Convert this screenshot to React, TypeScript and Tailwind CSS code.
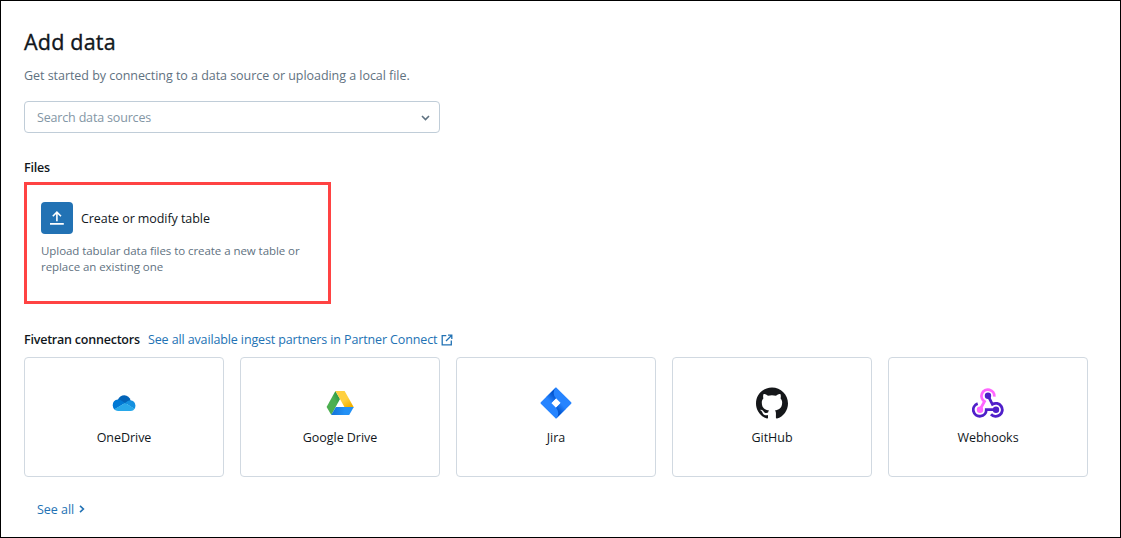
import type { ReactNode } from "react";
import { SiGithub } from "react-icons/si";

function OneDriveIcon() {
  return (
    <svg width="32" height="32" viewBox="0 0 32 32">
      <path d="M9.6 13.2 Q11.8 8.2 16.4 8.2 Q21 8.4 22.7 13.6 L18.5 17.5Z" fill="#0364b8" />
      <path d="M10 12.6 Q4.7 13 4.7 18.6 Q4.9 21.1 6.4 22.5 L17.2 16.1 L12.3 13 Q11.2 12.5 10 12.6Z" fill="#0078d4" />
      <path d="M22.4 13.3 Q19.7 13.3 17 16.1 L26.5 22.1 Q27.5 20.4 27.4 18.5 Q26.9 13.8 22.4 13.3Z" fill="#1490df" />
      <path d="M6.2 22.2 L17.1 16 L26.7 21.8 Q25.2 24 22.9 24 L10 24 Q7.7 23.9 6.2 22.2Z" fill="#28a8ea" />
    </svg>
  );
}

function GoogleDriveIcon() {
  return (
    <svg width="32" height="32" viewBox="0 0 32 32">
      <defs>
        <linearGradient id="gd-green" x1="0" y1="1" x2="1" y2="0">
          <stop offset="0.6" stopColor="#4caf50" />
          <stop offset="1" stopColor="#178b3f" />
        </linearGradient>
        <linearGradient id="gd-yellow" x1="0" y1="0" x2="0.7" y2="1">
          <stop offset="0.6" stopColor="#ffd040" />
          <stop offset="1" stopColor="#f2b100" />
        </linearGradient>
        <linearGradient id="gd-blue" x1="0" y1="0" x2="1" y2="0">
          <stop offset="0" stopColor="#1272d8" />
          <stop offset="0.6" stopColor="#2391f5" />
        </linearGradient>
      </defs>
      <path d="M11.4 4 L16 12 L7.3 28 L2.6 20Z" fill="url(#gd-green)" />
      <path d="M11.4 4 H20.6 L29.8 20.2 H20.6Z" fill="url(#gd-yellow)" />
      <path d="M11.8 20 H29.8 L25.2 28 H7.2Z" fill="url(#gd-blue)" />
    </svg>
  );
}

function JiraIcon() {
  return (
    <svg width="32" height="32" viewBox="0 0 32 32">
      <defs>
        <linearGradient id="jira-top" x1="15.5" y1="6" x2="8.5" y2="13" gradientUnits="userSpaceOnUse">
          <stop offset="0.18" stopColor="#0052cc" />
          <stop offset="1" stopColor="#2684ff" />
        </linearGradient>
        <linearGradient id="jira-bottom" x1="16.5" y1="26" x2="23.5" y2="19" gradientUnits="userSpaceOnUse">
          <stop offset="0.18" stopColor="#0052cc" />
          <stop offset="1" stopColor="#2684ff" />
        </linearGradient>
      </defs>
      <path d="M31.2 15.2 L16 0.2 L0.8 15.2 Q0.2 16 0.8 16.8 L16 31.8 L31.2 16.8 Q31.8 16 31.2 15.2Z M16 20.7 L11.3 16 L16 11.3 L20.7 16Z" fill="#2684ff" fillRule="evenodd" />
      <path d="M16 11.3 Q11.2 6 16 0.2 L5.8 10.4 L11.3 16Z" fill="url(#jira-top)" />
      <path d="M20.7 16 L16 20.7 Q20.8 26 16 31.8 L26.2 21.6Z" fill="url(#jira-bottom)" />
    </svg>
  );
}

function WebhooksIcon() {
  return (
    <svg width="32" height="32" viewBox="0 0 32 32" fill="none" strokeWidth="2.8">
      <path d="M8 22.7 L12.5 14.4 A6.4 6.4 0 1 1 22.3 9.6" stroke="#ff66ff" />
      <path d="M16 8.7 L20.4 17.3 A6.5 6.5 0 1 1 19 27.2" stroke="#4f1fc9" />
      <path d="M5.7 16.6 A6.5 6.5 0 1 0 14.3 22.7 H24" stroke="#4f1fc9" />
      <circle cx="16" cy="8.7" r="3.2" fill="#4f1fc9" />
      <circle cx="8" cy="22.7" r="3.2" fill="#ff66ff" />
      <circle cx="24" cy="22.7" r="3.2" fill="#4f1fc9" />
    </svg>
  );
}

function ConnectorCard({ name, icon }: { name: string; icon: ReactNode }) {
  return (
    <div className="flex h-[120px] w-[200px] flex-col items-center rounded-[4px] border border-[#d1d9e1] pt-[29px]">
      {icon}
      <span className="mt-[9px] leading-5">{name}</span>
    </div>
  );
}

export default function App() {
  return (
    <main className="h-[538px] w-[1121px] overflow-hidden border border-black bg-white pt-[27px] pl-[23px] font-['Open_Sans','Noto_Sans',sans-serif] text-[12.5px] tracking-[-0.04px] text-[#11171c]">
      <h1 className="text-[21.5px] leading-7 font-medium tracking-[0.2px] [-webkit-text-stroke:0.35px_#11171c]">Add data</h1>
      <p className="mt-[10px] leading-5 text-[#5f7281]">
        <span>Get started by connecting to a data source or uploading a local file.</span>
      </p>
      <div className="mt-[15px] flex h-8 w-[416px] items-center justify-between rounded-[4px] border border-[#c0cdd8] pr-[9px] pl-3 text-[#8396a5]">
        <span className="pt-[2px] tracking-[-0.17px]">Search data sources</span>
        <svg className="mt-px" width="9" height="6" viewBox="0 0 9 6" fill="none" stroke="#5f7281" strokeWidth="1.6">
          <path d="M1 1 L4.5 4.5 L8 1" />
        </svg>
      </div>
      <h2 className="mt-[25px] leading-5 font-semibold tracking-[-0.2px]">
        <span>Files</span>
      </h2>
      <section className="mt-[4px] h-[122px] w-[307px] border-3 border-[#ff4343] pt-[17px] pl-[14px]">
        <div className="flex items-center gap-2">
          <svg className="rounded-[4px] bg-[#2272b4]" width="32" height="32" viewBox="0 0 32 32" fill="none" stroke="#fff" strokeWidth="1.6">
            <path d="M9 21.9 H22.8 M15.9 19.2 V10.2 M11.8 14.3 L15.9 10.2 L20 14.3" />
          </svg>
          <span className="pt-[2px] tracking-[-0.07px]">Create or modify table</span>
        </div>
        <p className="mt-[9px] text-[11.5px] leading-4 tracking-[-0.06px] text-[#5f7281]">
          <span>Upload tabular data files to create a new table or</span>
          <br />
          <span>replace an existing one</span>
        </p>
      </section>
      <div className="mt-[26px] flex items-center leading-5">
        <h2 className="w-[124px] font-semibold tracking-[-0.22px] whitespace-nowrap">
          <span>Fivetran connectors</span>
        </h2>
        <a className="flex items-center text-[#2272b4]">
          <span className="w-[293px] tracking-[-0.125px] whitespace-nowrap">See all available ingest partners in Partner Connect</span>
          <svg className="mb-px" width="12" height="12" viewBox="0 0 12 12" fill="none" stroke="#2272b4" strokeWidth="1.3">
            <path d="M5.3 1.7 H1.2 V10.8 H10.3 V6.6 M7 1.2 H10.8 V5 M10.8 1.2 L5 7" />
          </svg>
        </a>
      </div>
      <div className="mt-[7px] flex gap-4">
        <ConnectorCard name="OneDrive" icon={<OneDriveIcon />} />
        <ConnectorCard name="Google Drive" icon={<GoogleDriveIcon />} />
        <ConnectorCard name="Jira" icon={<JiraIcon />} />
        <ConnectorCard name="GitHub" icon={<SiGithub size={32} color="#15171a" />} />
        <ConnectorCard name="Webhooks" icon={<WebhooksIcon />} />
      </div>
      <a className="mt-[23px] ml-[13px] flex items-center leading-5 text-[#2272b4]">
        <span className="w-[42px]">See all</span>
        <svg className="mb-[2px]" width="6" height="8" viewBox="0 0 6 8" fill="none" stroke="#2272b4" strokeWidth="1.6">
          <path d="M1 0.8 L4.4 4 L1 7.2" />
        </svg>
      </a>
    </main>
  );
}
